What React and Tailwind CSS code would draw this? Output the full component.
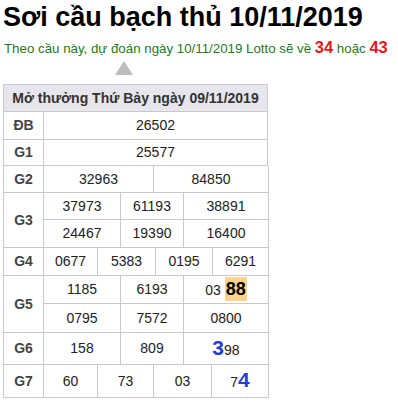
import React from "react";

const B = "border-[#c8c8d0]";

function Cell({ w, children, className = "" }) {
  return (
    <div
      className={`flex items-center justify-center border-r border-b ${B} ${className}`}
      style={w ? { width: w } : { flex: 1 }}
    >
      {children}
    </div>
  );
}

function Row({ label, rows }) {
  return (
    <div className="flex">
      <div className={`w-[40px] shrink-0 flex items-center justify-center border-r border-b ${B} font-bold text-[14px] text-[#444]`}>
        {label}
      </div>
      <div className="flex-1 flex flex-col">
        {rows.map((r, i) => (
          <div key={i} className="flex" style={{ height: r.h }}>
            {r.cells.map((c, j) => (
              <Cell key={j} w={c.w}>
                {c.v}
              </Cell>
            ))}
          </div>
        ))}
      </div>
    </div>
  );
}

export default function App() {
  const big = "text-[#1f3fd6] font-bold text-[21px] leading-none";
  return (
    <div className="w-[398px] h-[404px] bg-white overflow-hidden" style={{ fontFamily: '"Liberation Sans", Arial, sans-serif' }}>
      <div className="h-[37px] pl-[3px] text-[27px] font-bold leading-[34px] text-black whitespace-nowrap">
        Sơi cầu bạch thủ 10/11/2019
      </div>
      <div className="pl-[4px] text-[13.3px] leading-[20px] h-[20px] text-[#247a24] whitespace-nowrap">
        Theo cầu này, dự đoán ngày 10/11/2019 Lotto sẽ về{" "}
        <span className="text-[#e21c1c] font-bold text-[16.5px]">34</span> hoặc{" "}
        <span className="text-[#e21c1c] font-bold text-[16.5px]">43</span>
      </div>
      <div className="mt-[4px] ml-[115px] w-0 h-0 border-l-[9px] border-r-[9px] border-b-[14px] border-l-transparent border-r-transparent border-b-[#bdbdbd]"></div>
      <div className={`mt-[9px] ml-[3px] w-[265px] border-t border-l ${B} text-[14px] text-[#222]`}>
        <div className={`h-[27px] flex items-center justify-center bg-[#e6e6ec] border-r border-b ${B} font-bold text-[14px] text-[#333]`}>
          Mở thưởng Thứ Bảy ngày 09/11/2019
        </div>
        <Row label="ĐB" rows={[{ h: 28, cells: [{ v: "26502" }] }]} />
        <Row label="G1" rows={[{ h: 26, cells: [{ v: "25577" }] }]} />
        <Row label="G2" rows={[{ h: 27, cells: [{ w: 110, v: "32963" }, { w: 115, v: "84850" }] }]} />
        <Row
          label="G3"
          rows={[
            { h: 27, cells: [{ w: 77, v: "37973" }, { w: 63, v: "61193" }, { w: 85, v: "38891" }] },
            { h: 28, cells: [{ w: 77, v: "24467" }, { w: 63, v: "19390" }, { w: 85, v: "16400" }] },
          ]}
        />
        <Row
          label="G4"
          rows={[{ h: 28, cells: [{ w: 54, v: "0677" }, { w: 58, v: "5383" }, { w: 57, v: "0195" }, { w: 56, v: "6291" }] }]}
        />
        <Row
          label="G5"
          rows={[
            {
              h: 28,
              cells: [
                { w: 77, v: "1185" },
                { w: 63, v: "6193" },
                {
                  w: 85,
                  v: (
                    <span>
                      03{" "}
                      <span className="bg-[#fcd48c] px-[1px] py-[2px] font-bold text-[18px] text-black">88</span>
                    </span>
                  ),
                },
              ],
            },
            { h: 29, cells: [{ w: 77, v: "0795" }, { w: 63, v: "7572" }, { w: 85, v: "0800" }] },
          ]}
        />
        <Row
          label="G6"
          rows={[
            {
              h: 32,
              cells: [
                { w: 77, v: "158" },
                { w: 63, v: "809" },
                {
                  w: 85,
                  v: (
                    <span className="flex items-baseline">
                      <span className={big}>3</span>
                      <span>98</span>
                    </span>
                  ),
                },
              ],
            },
          ]}
        />
        <Row
          label="G7"
          rows={[
            {
              h: 33,
              cells: [
                { w: 54, v: "60" },
                { w: 56, v: "73" },
                { w: 58, v: "03" },
                {
                  w: 57,
                  v: (
                    <span className="flex items-baseline">
                      <span>7</span>
                      <span className={big}>4</span>
                    </span>
                  ),
                },
              ],
            },
          ]}
        />
      </div>
    </div>
  );
}
